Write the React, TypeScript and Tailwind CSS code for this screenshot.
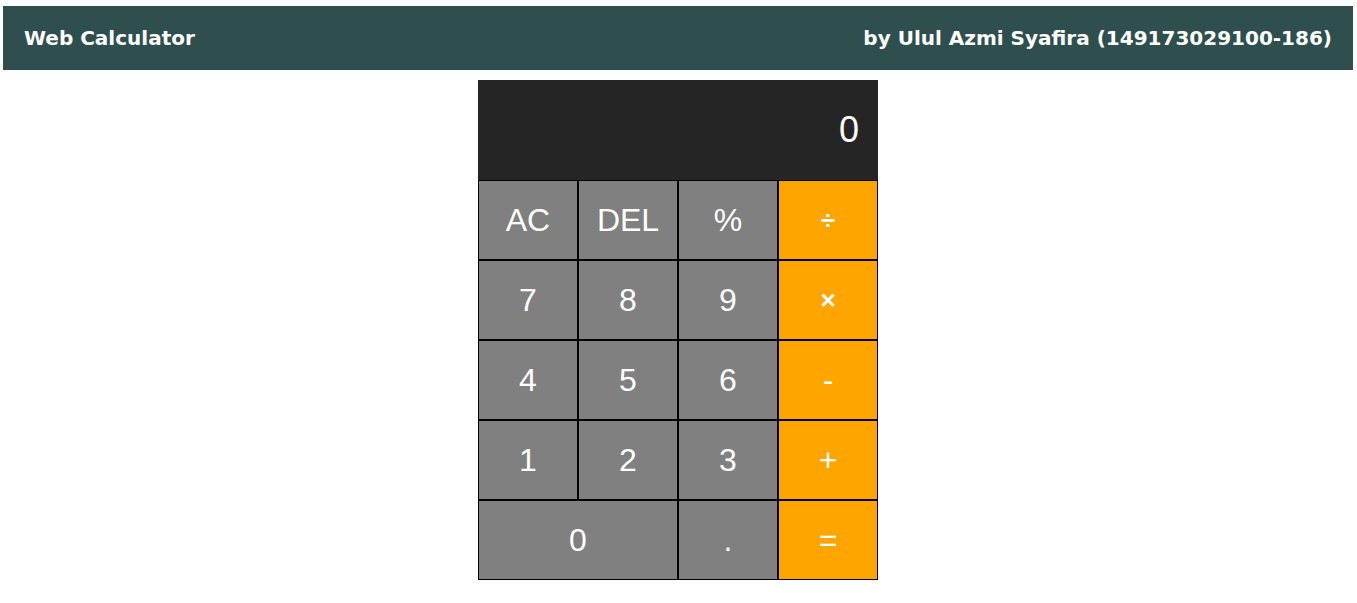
const keys: { label: string; tone: "gray" | "orange"; wide?: boolean; heavy?: boolean }[] = [
  { label: "AC", tone: "gray" },
  { label: "DEL", tone: "gray" },
  { label: "%", tone: "gray" },
  { label: "÷", tone: "orange", heavy: true },
  { label: "7", tone: "gray" },
  { label: "8", tone: "gray" },
  { label: "9", tone: "gray" },
  { label: "×", tone: "orange", heavy: true },
  { label: "4", tone: "gray" },
  { label: "5", tone: "gray" },
  { label: "6", tone: "gray" },
  { label: "-", tone: "orange" },
  { label: "1", tone: "gray" },
  { label: "2", tone: "gray" },
  { label: "3", tone: "gray" },
  { label: "+", tone: "orange" },
  { label: "0", tone: "gray", wide: true },
  { label: ".", tone: "gray" },
  { label: "=", tone: "orange" },
];

export default function App() {
  return (
    <div className="min-h-[603px] bg-white pt-[6px]">
      {/* Header */}
      <header className="ml-[3px] mr-[4px] h-[64px] bg-[#2f4f4f] px-[21px] flex items-center justify-between text-white font-bold text-[20px] font-['DejaVu_Sans',Verdana,sans-serif]">
        <span>Web Calculator</span>
        <span>by Ulul Azmi Syafira (149173029100-186)</span>
      </header>

      {/* Calculator */}
      <div className="mt-[10px] flex justify-center pr-[1px]">
        <div className="w-[400px] font-['Liberation_Sans',Arial,sans-serif] text-white">
          <div className="h-[100px] bg-[#252525] flex items-center justify-end pr-[19px] text-[36px]">
            0
          </div>
          <div className="grid grid-cols-4">
            {keys.map((k) => (
              <button
                key={k.label}
                className={
                  "h-[80px] border border-black flex items-center justify-center text-white " +
                  (k.tone === "orange" ? "bg-[#ffa500]" : "bg-[#808080]") +
                  (k.wide ? " col-span-2" : "") +
                  (k.heavy ? " text-[26px] font-bold" : " text-[32px]")
                }
              >
                {k.label}
              </button>
            ))}
          </div>
        </div>
      </div>
    </div>
  );
}
